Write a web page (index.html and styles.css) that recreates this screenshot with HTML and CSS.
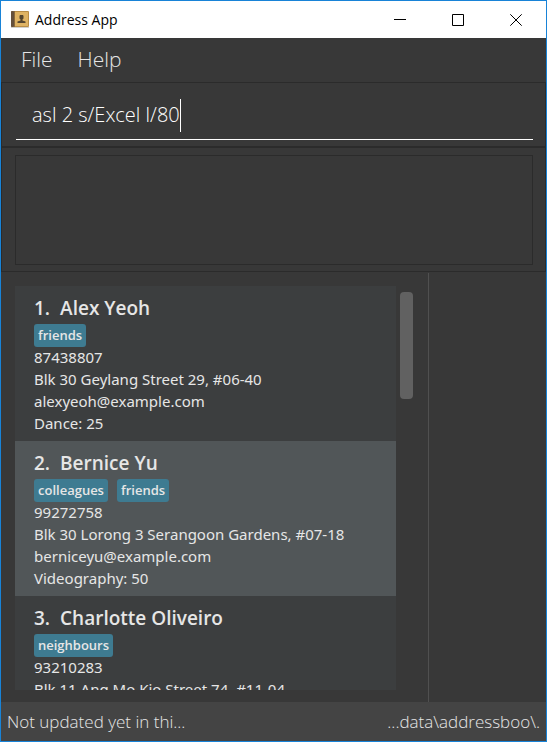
FILE: index.html
```html
<!DOCTYPE html>
<html lang="en">
<head>
<meta charset="utf-8">
<title>Address App</title>
<link rel="stylesheet" href="styles.css">
</head>
<body>
<div class="window">
  <header class="titlebar">
    <svg class="app-icon" width="18" height="18" viewBox="0 0 18 18" aria-hidden="true">
      <rect x="0" y="16" width="18" height="1" fill="#d2d0cc"/>
      <rect x="0" y="0" width="18" height="16" rx="1" fill="#b98d45"/>
      <rect x="4" y="1" width="13" height="14" fill="#dfb363"/>
      <rect x="0" y="0" width="3" height="16" rx="1" fill="#65503b"/>
      <rect x="3" y="0" width="1" height="16" fill="#8b6a3b"/>
      <path d="M9 4h3l.5 1v2.500l-1 1v1l3 1v1.500h-8v-1.500l3-1v-1l-1-1V5z" fill="#54452f"/>
    </svg>
    <h1 class="title">Address App</h1>
    <div class="controls">
      <button class="control" type="button" aria-label="Minimize"><svg width="12" height="12" viewBox="0 0 12 12"><path d="M0 5.500h12" stroke="#000"/></svg></button>
      <button class="control" type="button" aria-label="Maximize"><svg width="12" height="12" viewBox="0 0 12 12"><path d="M.5.5h11v11H.5z" fill="none" stroke="#000"/></svg></button>
      <button class="control" type="button" aria-label="Close"><svg width="12" height="12" viewBox="0 0 12 12"><path d="M.3.3l11.400 11.400M11.700.3L.3 11.700" stroke="#000"/></svg></button>
    </div>
  </header>
  <nav class="menubar">
    <button class="menu" type="button">File</button>
    <button class="menu" type="button">Help</button>
  </nav>
  <section class="command-pane">
    <div class="command-box">
      <input class="command" type="text" value="asl 2 s/Excel l/80" aria-label="Command">
      <span class="caret"></span>
    </div>
  </section>
  <section class="result-pane">
    <output class="result" aria-label="Result"></output>
  </section>
  <main class="split">
    <section class="list-pane">
      <ol class="people">
        <li class="card">
          <h2 class="name"><span>1.</span><span>Alex Yeoh</span></h2>
          <div class="tags"><span class="tag">friends</span></div>
          <p class="line">87438807</p>
          <p class="line">Blk 30 Geylang Street 29, #06-40</p>
          <p class="line">alexyeoh@example.com</p>
          <p class="line">Dance: 25</p>
        </li>
        <li class="card card-even">
          <h2 class="name"><span>2.</span><span>Bernice Yu</span></h2>
          <div class="tags"><span class="tag">colleagues</span><span class="tag">friends</span></div>
          <p class="line">99272758</p>
          <p class="line">Blk 30 Lorong 3 Serangoon Gardens, #07-18</p>
          <p class="line">berniceyu@example.com</p>
          <p class="line">Videography: 50</p>
        </li>
        <li class="card">
          <h2 class="name"><span>3.</span><span>Charlotte Oliveiro</span></h2>
          <div class="tags"><span class="tag">neighbours</span></div>
          <p class="line">93210283</p>
          <p class="line">Blk 11 Ang Mo Kio Street 74, #11-04</p>
        </li>
      </ol>
      <div class="scrollbar"><div class="thumb"></div></div>
    </section>
    <section class="detail-pane"></section>
  </main>
  <footer class="statusbar">
    <span>Not updated yet in thi...</span>
    <span>...data\addressboo\.</span>
  </footer>
</div>
</body>
</html>
```
FILE: styles.css
```css
* {
  box-sizing: border-box;
}

body {
  margin: 0;
  font-family: "Open Sans", "Noto Sans", sans-serif;
  color: #e6e6e6;
}

button {
  border: 0;
  background: none;
  font: inherit;
  color: inherit;
}

.window {
  display: flex;
  flex-direction: column;
  height: 100vh;
  border: 1px solid #1883d7;
  background: #383838;
}

.titlebar {
  display: flex;
  align-items: center;
  flex: none;
  height: 37px;
  padding: 0 1px 0 10px;
  background: #fff;
  color: #000;
}

.title {
  flex: 1;
  margin: 0 0 0 6px;
  font-size: 14px;
  font-weight: 400;
}

.controls {
  display: flex;
}

.control {
  display: grid;
  place-items: center;
  width: 58px;
  height: 36px;
  padding: 0;
}

.menubar {
  display: flex;
  flex: none;
  gap: 25px;
  height: 44px;
  padding: 0 20px;
}

.menu {
  padding: 0 0 2px;
  font-size: 21px;
  font-weight: 300;
}

.command-pane {
  flex: none;
  height: 65px;
  padding: 16px 12px 8px 14px;
  border: 1px solid #2b2b2b;
}

.command-box {
  display: flex;
  align-items: flex-start;
  height: 41px;
  padding-left: 16px;
  border-bottom: 1px solid #fff;
}

.command {
  field-sizing: content;
  height: 32px;
  padding: 0;
  border: 0;
  outline: 0;
  background: transparent;
  font: 300 20px/32px "Open Sans", "Noto Sans", sans-serif;
  color: #fff;
}

.caret {
  width: 1px;
  height: 33px;
  background: #fff;
}

.result-pane {
  flex: none;
  height: 125px;
  padding: 7px 12px 6px 13px;
  border: 1px solid #2b2b2b;
}

.result {
  display: block;
  height: 110px;
  border: 1px solid #2b2b2b;
}

.split {
  display: grid;
  flex: 1;
  grid-template-columns: 18fr 5fr;
  min-height: 0;
  padding-top: 1px;
}

.list-pane {
  display: flex;
  gap: 4px;
  min-height: 0;
  padding: 13px 15px 12px 14px;
}

.people {
  flex: 1;
  margin: 0;
  padding: 0;
  overflow: hidden;
  list-style: none;
  background: #3c3e3f;
}

.card {
  padding: 10px 19px 7px;
}

.card-even {
  background: #515658;
}

.name {
  display: flex;
  gap: 10px;
  margin: 0 0 4px;
  font-size: 19px;
  font-weight: 600;
  line-height: 24px;
}

.tags {
  display: flex;
  gap: 9px;
  height: 22px;
}

.tag {
  height: 23px;
  padding: 0 4px;
  border-radius: 3px;
  background: #3e7b91;
  font-size: 13px;
  font-weight: 600;
  line-height: 22px;
}

.line {
  margin: 0;
  font-family: "Noto Sans", "Open Sans", sans-serif;
  font-size: 15px;
  line-height: 22px;
  white-space: nowrap;
}

.scrollbar {
  width: 13px;
  padding-top: 6px;
}

.thumb {
  height: 107px;
  border-radius: 4px;
  background: #616161;
}

.detail-pane {
  border-left: 1px solid #505050;
}

.statusbar {
  display: flex;
  justify-content: space-between;
  flex: none;
  height: 39px;
  padding: 0 6px;
  background: #444;
  font-size: 17px;
  font-weight: 300;
  line-height: 39px;
}
```
